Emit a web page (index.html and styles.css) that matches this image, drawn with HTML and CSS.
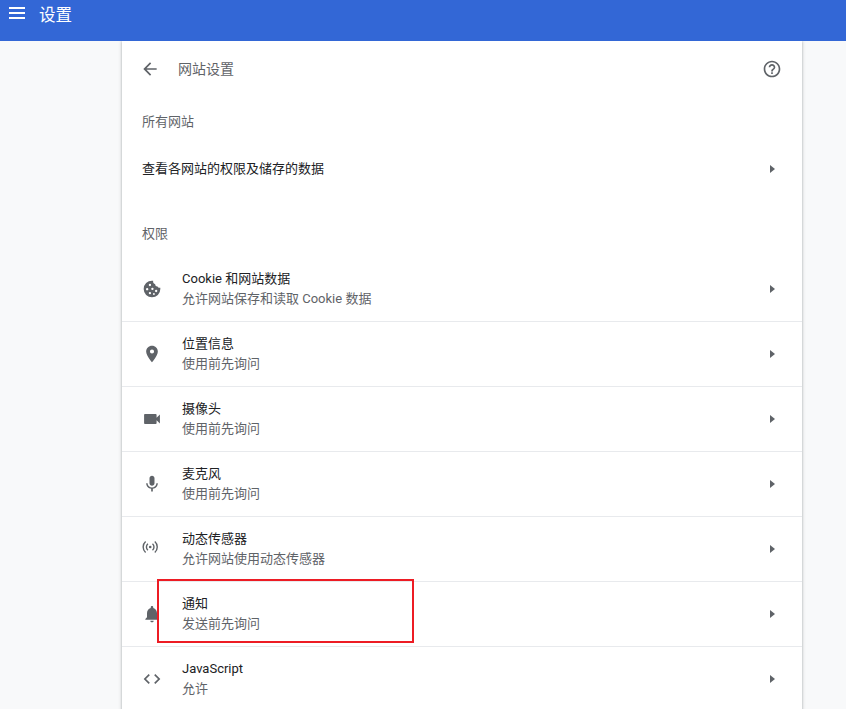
FILE: index.html
```html
<!DOCTYPE html>
<html lang="zh-CN">
<head>
<meta charset="utf-8">
<title>设置</title>
<link rel="stylesheet" href="styles.css">
</head>
<body>
<header class="toolbar">
  <svg class="menu" viewBox="0 0 16 12"><path d="M0 0h16v2H0zM0 5h16v2H0zM0 10h16v2H0z"/></svg>
  <h1>设置</h1>
</header>
<main class="card">
  <div class="subheader">
    <svg class="icon" viewBox="0 0 24 24"><path d="M20 11H7.830l5.590-5.590L12 4l-8 8 8 8 1.410-1.410L7.830 13H20v-2z"/></svg>
    <h2>网站设置</h2>
    <svg class="icon help" viewBox="0 0 24 24"><path d="M11 18h2v-2h-2v2zm1-16C6.480 2 2 6.480 2 12s4.480 10 10 10 10-4.480 10-10S17.520 2 12 2zm0 18c-4.410 0-8-3.590-8-8s3.590-8 8-8 8 3.590 8 8-3.590 8-8 8zm0-14c-2.210 0-4 1.790-4 4h2c0-1.100.9-2 2-2s2 .9 2 2c0 2-3 1.750-3 5h2c0-2.250 3-2.500 3-5 0-2.210-1.790-4-4-4z"/></svg>
  </div>
  <h3 class="section">所有网站</h3>
  <div class="link-row">
    <span class="title">查看各网站的权限及储存的数据</span>
    <svg class="arrow" viewBox="0 0 5 8"><path d="M0 0l5 4-5 4z"/></svg>
  </div>
  <h3 class="section permissions">权限</h3>
  <div class="row">
    <svg class="icon" viewBox="0 0 24 24"><path fill-rule="evenodd" d="M12 2a10 10 0 1 0 10 10c0-.6 0-1-.1-1.500-1.200.4-2.800-.2-3.200-1.600-1.700.2-3.100-1-2.900-2.800-1.700-.1-2.900-1.700-2.400-3.900C13 2 12.500 2 12 2zM9.500 5.800a1.400 1.400 0 1 1 0 2.800 1.400 1.400 0 0 1 0-2.800zm-3.300 5a1.400 1.400 0 1 1 0 2.800 1.400 1.400 0 0 1 0-2.800zm6.300-.4a1.400 1.400 0 1 1 0 2.800 1.400 1.400 0 0 1 0-2.800zm4.500 2.600a1.400 1.400 0 1 1 0 2.800 1.400 1.400 0 0 1 0-2.800zm-7.500 2.500a1.400 1.400 0 1 1 0 2.800 1.400 1.400 0 0 1 0-2.800zm4.800 1.400a1.100 1.100 0 1 1 0 2.200 1.100 1.100 0 0 1 0-2.200z"/></svg>
    <div class="text"><div class="title">Cookie 和网站数据</div><div class="detail">允许网站保存和读取 Cookie 数据</div></div>
    <svg class="arrow" viewBox="0 0 5 8"><path d="M0 0l5 4-5 4z"/></svg>
  </div>
  <div class="row">
    <svg class="icon" viewBox="0 0 24 24"><path d="M12 2C8.130 2 5 5.130 5 9c0 5.250 7 13 7 13s7-7.750 7-13c0-3.870-3.130-7-7-7zm0 9.500a2.500 2.500 0 0 1 0-5 2.500 2.500 0 0 1 0 5z"/></svg>
    <div class="text"><div class="title">位置信息</div><div class="detail">使用前先询问</div></div>
    <svg class="arrow" viewBox="0 0 5 8"><path d="M0 0l5 4-5 4z"/></svg>
  </div>
  <div class="row">
    <svg class="icon" viewBox="0 0 24 24"><path d="M17.500 10.500V7c0-.55-.45-1-1-1h-13c-.55 0-1 .45-1 1v10c0 .55.45 1 1 1h13c.55 0 1-.45 1-1v-3.500l4 4v-11z"/></svg>
    <div class="text"><div class="title">摄像头</div><div class="detail">使用前先询问</div></div>
    <svg class="arrow" viewBox="0 0 5 8"><path d="M0 0l5 4-5 4z"/></svg>
  </div>
  <div class="row">
    <svg class="icon" viewBox="0 0 24 24"><path d="M12 14c1.660 0 2.990-1.340 2.990-3L15 5c0-1.660-1.340-3-3-3S9 3.340 9 5v6c0 1.660 1.340 3 3 3zm5.300-3c0 3-2.540 5.100-5.300 5.100S6.700 14 6.700 11H5c0 3.410 2.720 6.230 6 6.720V21h2v-3.280c3.280-.48 6-3.300 6-6.720h-1.700z"/></svg>
    <div class="text"><div class="title">麦克风</div><div class="detail">使用前先询问</div></div>
    <svg class="arrow" viewBox="0 0 5 8"><path d="M0 0l5 4-5 4z"/></svg>
  </div>
  <div class="row">
    <svg class="icon sensor" viewBox="0 0 16 14"><circle cx="8.200" cy="7" r="1.300"/><path class="wave" d="M5.900 3.700a4.400 4.400 0 0 0 0 6.600M10.500 3.700a4.400 4.400 0 0 1 0 6.600M3.600 1.500a7.400 7.400 0 0 0 0 11M12.800 1.500a7.400 7.400 0 0 1 0 11"/></svg>
    <div class="text"><div class="title">动态传感器</div><div class="detail">允许网站使用动态传感器</div></div>
    <svg class="arrow" viewBox="0 0 5 8"><path d="M0 0l5 4-5 4z"/></svg>
  </div>
  <div class="row">
    <svg class="icon" viewBox="0 0 24 24"><path d="M12 22c1.100 0 2-.9 2-2h-4c0 1.100.89 2 2 2zm6-6v-5c0-3.070-1.640-5.640-4.500-6.320V4c0-.83-.67-1.500-1.500-1.500s-1.500.67-1.500 1.500v.68C7.630 5.360 6 7.920 6 11v5l-2 2v1h16v-1l-2-2z"/></svg>
    <div class="text"><div class="title">通知</div><div class="detail">发送前先询问</div></div>
    <svg class="arrow" viewBox="0 0 5 8"><path d="M0 0l5 4-5 4z"/></svg>
    <div class="highlight"></div>
  </div>
  <div class="row">
    <svg class="icon" viewBox="0 0 24 24"><path d="M9.400 16.600L4.800 12l4.600-4.600L8 6l-6 6 6 6 1.400-1.400zm5.200 0l4.600-4.600-4.600-4.600L16 6l6 6-6 6-1.400-1.400z"/></svg>
    <div class="text"><div class="title">JavaScript</div><div class="detail">允许</div></div>
    <svg class="arrow" viewBox="0 0 5 8"><path d="M0 0l5 4-5 4z"/></svg>
  </div>
</main>
</body>
</html>
```
FILE: styles.css
```css
* { box-sizing: border-box; }
html, body { height: 100%; overflow: hidden; }
body {
  margin: 0;
  display: flex;
  flex-direction: column;
  background: #f8f9fa;
  color: #202124;
  font: 13px/20px Roboto, "Noto Sans CJK SC", sans-serif;
}
h1, h2, h3 { margin: 0; font-weight: 400; }
svg { display: block; flex: none; fill: #5f6368; }
.toolbar {
  position: relative;
  z-index: 1;
  flex: none;
  display: flex;
  align-items: flex-start;
  gap: 14px;
  height: 41px;
  padding: 3px 9px;
  background: #3367d6;
}
.toolbar h1 { color: #fff; font-size: 16.5px; line-height: 25px; }
.menu { width: 16px; height: 12px; margin-top: 4px; fill: #fff; }
.card {
  flex: 1 0 auto;
  width: 680px;
  margin-left: 122px;
  background: #fff;
  box-shadow: 0 1px 2px rgba(60, 64, 67, .3), 0 1px 3px 1px rgba(60, 64, 67, .15);
}
.subheader {
  display: flex;
  align-items: center;
  height: 56px;
  padding: 0 20px 0 18px;
}
.subheader h2 { margin-left: 18px; color: #5f6368; font-size: 14px; }
.help { margin-left: auto; }
.section { padding: 15px 20px 12px; color: #5f6368; font-size: 13px; }
.permissions { padding: 31px 20px 13px; }
.link-row { display: flex; align-items: center; height: 49px; padding: 0 27px 0 20px; }
.icon { width: 20px; height: 20px; }
.arrow { width: 5px; height: 8px; margin-left: auto; }
.row {
  position: relative;
  display: flex;
  align-items: center;
  height: 65px;
  padding: 0 27px 0 20px;
  border-bottom: 1px solid #e8eaed;
}
.text { margin-left: 20px; }
.detail { color: #5f6368; }
.sensor { width: 16px; height: 14px; margin: 0 4px 4px 0; }
.wave { fill: none; stroke: #5f6368; stroke-width: 1.4; }
.highlight {
  position: absolute;
  left: 35px;
  top: -3px;
  width: 257px;
  height: 64px;
  border: 2px solid #ed1c24;
}
```
